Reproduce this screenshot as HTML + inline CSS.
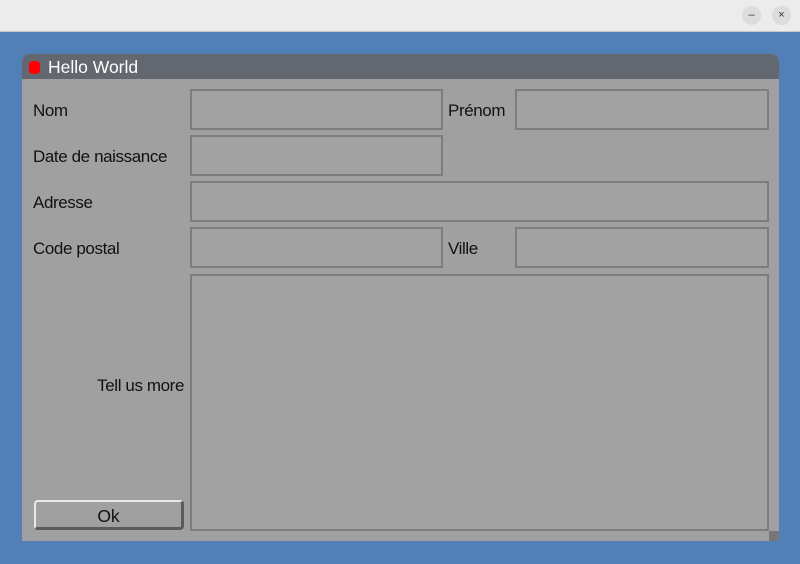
<!DOCTYPE html>
<html><head><style>
*{margin:0;padding:0;box-sizing:border-box}
body{width:800px;height:564px;background:#517fb6;position:relative;overflow:hidden;font-family:"Liberation Sans",sans-serif;color:#111}
.top{position:absolute;left:0;top:0;width:800px;height:32px;background:#ececec;border-bottom:1px solid #c8c8c8}
.btn{position:absolute;top:6px;width:19px;height:19px;border-radius:50%;background:#dcdcdc;font-size:11px;text-align:center;line-height:19px;color:#333}
.win{position:absolute;left:22px;top:54px;width:757px;height:487px;background:#a0a0a0;border-radius:8px 8px 0 0;overflow:hidden}
.title{height:25px;background:#636870;color:#fff;font-size:17.5px;line-height:27px;padding-left:26px;position:relative}
.dot{position:absolute;left:7px;top:7px;width:11px;height:13px;border-radius:4px;background:#f00}
.f{position:absolute;background:#a2a2a2;border:2px solid #7d7d7d}
.l{position:absolute;font-size:17px;letter-spacing:-0.4px}
.ok{position:absolute;left:12px;top:446px;width:150px;height:30px;border-radius:4px;background:#a0a0a0;border-top:2px solid #e8e8e8;border-left:2px solid #e8e8e8;border-right:3px solid #5a5a5a;border-bottom:3px solid #5a5a5a;text-align:center;font-size:17.5px;line-height:28px}
.grip{position:absolute;right:0;bottom:0;width:10px;height:10px;background:#777}
</style></head><body>
<div class="top"><div class="btn" style="left:742px">–</div><div class="btn" style="left:772px">×</div></div>
<div class="win">
<div class="title"><div class="dot"></div>Hello World</div>
<div class="l" style="left:11px;top:47px">Nom</div>
<div class="f" style="left:168px;top:35px;width:253px;height:41px"></div>
<div class="l" style="left:426px;top:47px">Prénom</div>
<div class="f" style="left:493px;top:35px;width:254px;height:41px"></div>
<div class="l" style="left:11px;top:93px">Date de naissance</div>
<div class="f" style="left:168px;top:81px;width:253px;height:41px"></div>
<div class="l" style="left:11px;top:139px">Adresse</div>
<div class="f" style="left:168px;top:127px;width:579px;height:41px"></div>
<div class="l" style="left:11px;top:185px">Code postal</div>
<div class="f" style="left:168px;top:173px;width:253px;height:41px"></div>
<div class="l" style="left:426px;top:185px">Ville</div>
<div class="f" style="left:493px;top:173px;width:254px;height:41px"></div>
<div class="l" style="right:595px;top:322px">Tell us more</div>
<div class="f" style="left:168px;top:220px;width:579px;height:257px"></div>
<div class="ok">Ok</div>
<div class="grip"></div>
</div>
</body></html>
